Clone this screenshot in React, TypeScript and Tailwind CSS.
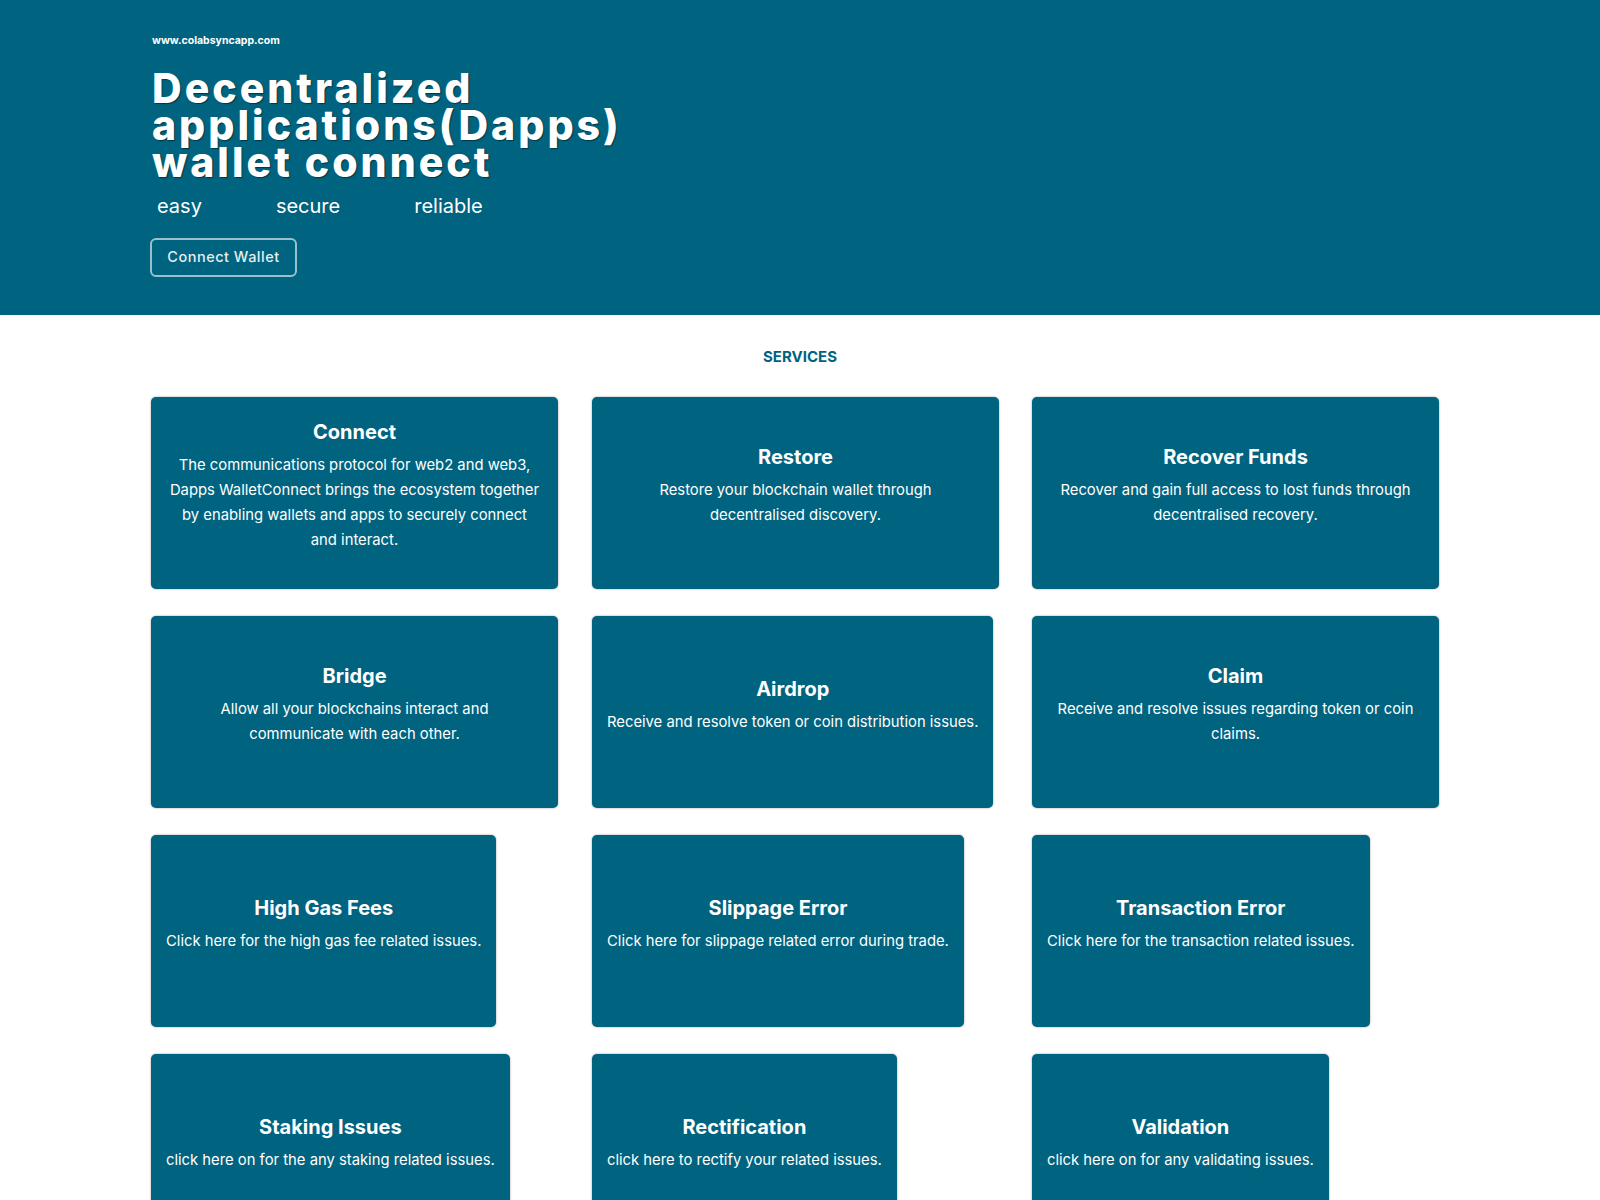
import React from 'react';

interface Service {
  title: string;
  text: string;
}

// multi-line texts keep the reference's line breaks
const rows: Service[][] = [
  [
    {
      title: 'Connect',
      text: 'The communications protocol for web2 and web3,\nDapps WalletConnect brings the ecosystem together\nby enabling wallets and apps to securely connect\nand interact.',
    },
    { title: 'Restore', text: 'Restore your blockchain wallet through\ndecentralised discovery.' },
    { title: 'Recover Funds', text: 'Recover and gain full access to lost funds through\ndecentralised recovery.' },
  ],
  [
    { title: 'Bridge', text: 'Allow all your blockchains interact and\ncommunicate with each other.' },
    { title: 'Airdrop', text: 'Receive and resolve token or coin distribution issues.' },
    { title: 'Claim', text: 'Receive and resolve issues regarding token or coin\nclaims.' },
  ],
  [
    { title: 'High Gas Fees', text: 'Click here for the high gas fee related issues.' },
    { title: 'Slippage Error', text: 'Click here for slippage related error during trade.' },
    { title: 'Transaction Error', text: 'Click here for the transaction related issues.' },
  ],
  [
    { title: 'Staking Issues', text: 'click here on for the any staking related issues.' },
    { title: 'Rectification', text: 'click here to rectify your related issues.' },
    { title: 'Validation', text: 'click here on for any validating issues.' },
  ],
];

const ServiceCard: React.FC<{ service: Service }> = ({ service }) => {
  const wraps = service.text.includes('\n');
  return (
    <div
      className={`flex h-[192px] max-w-[407px] cursor-pointer flex-col justify-center rounded-[5px] bg-[#00637f] px-[15px] text-center text-white shadow-[0_0_2px_rgba(0,0,0,0.45)] ${
        wraps ? 'w-[407px]' : 'w-fit'
      }`}
    >
      <h3 className="text-[20px] font-bold leading-[30px]">{service.title}</h3>
      <p className="mt-[6px] mb-[15px] whitespace-pre-line text-[14.8px] leading-[25px]">{service.text}</p>
    </div>
  );
};

export default function App() {
  return (
    <div className="min-h-screen bg-white font-['Inter',sans-serif]">
      {/* Hero */}
      <header className="h-[315px] bg-[#00637f] text-white">
        <div className="pl-[152px] pt-[33px]">
          <p className="text-[10.5px] font-bold">www.colabsyncapp.com</p>
          <h1 className="mt-[21px] text-[41px] font-extrabold leading-[37px] tracking-[3px] [text-shadow:1px_1px_1px_rgba(0,0,0,0.45)]">
            Decentralized
            <br />
            applications(Dapps)
            <br />
            wallet connect
          </h1>
          <div className="mt-[10px] flex gap-[74px] pl-[5px] text-[20px]">
            <span>easy</span>
            <span>secure</span>
            <span>reliable</span>
          </div>
          <button className="mt-[17px] ml-[-2px] h-[39px] w-[147px] rounded-[6px] border-2 border-white/60 text-[14.5px] font-medium tracking-[0.5px] text-[#e6eef1]">
            Connect Wallet
          </button>
        </div>
      </header>

      {/* Services */}
      <section className="pt-[31px]">
        <h2 className="text-center text-[15px] font-bold text-[#00637f]">SERVICES</h2>
        <div className="mt-[28px] flex flex-col gap-[27px] pl-[151px]">
          {rows.map((row, i) => (
            <div key={i} className="grid grid-cols-[441px_440px_441px]">
              {row.map((s) => (
                <ServiceCard key={s.title} service={s} />
              ))}
            </div>
          ))}
        </div>
      </section>
    </div>
  );
}
